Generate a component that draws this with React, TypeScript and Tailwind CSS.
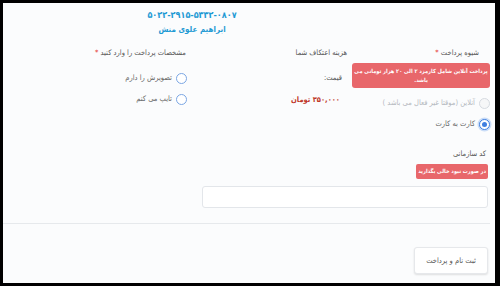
import {ReactElement} from 'react';

type RadioProps = {
    label: string,
    checked?: boolean,
    disabled?: boolean,
    className?: string,
};

function Radio({label, checked, disabled, className}: RadioProps): ReactElement {
    return (
        <div className={`flex h-[14px] items-center gap-[4px] ${className ?? ''}`}>
            <span
                className={
                    checked
                        ? 'flex h-[11px] w-[11px] items-center justify-center rounded-full border border-[#3f7fe0] bg-white shadow-[0_0_0_1.5px_#c9dcf7]'
                        : disabled
                            ? 'h-[11px] w-[11px] rounded-full border border-[#d6dbe1] bg-[#f6f7f8]'
                            : 'h-[11px] w-[11px] rounded-full border border-[#7aa6e4] bg-white'
                }
            >
                {checked ? <span className="h-[5px] w-[5px] rounded-full bg-[#3f7fe0]" /> : null}
            </span>
            <span className={`text-[7.5px] leading-[12px] ${disabled ? 'text-[#b4b8bd]' : 'text-[#666]'}`}>{label}</span>
        </div>
    );
}

export default function App(): ReactElement {
    return (
        <div className="h-[286px] w-[500px] bg-black pb-[3px] pl-[3px] pr-[5px] pt-[3px]">
            <div dir="rtl" className="h-full bg-[#fbfcfd] font-['DejaVu_Sans_Condensed','DejaVu_Sans',sans-serif]">
                <div className="pr-[114px] pt-[6px] text-center font-bold text-[#1f9ad4]">
                    <p className="text-[9px] leading-[12px]">۵۰۲۲-۲۹۱۵-۵۳۳۲-۰۸۰۷</p>
                    <p className="mt-[3px] text-[8px] leading-[12px]">ابراهیم علوی منش</p>
                </div>

                <div className="mt-[11px] flex pr-[5px]">
                    <div className="w-[138px]">
                        <p className="pr-[11px] text-[7.5px] leading-[12px] text-[#555]">
                            شیوه پرداخت <span className="text-[#e53935]">*</span>
                        </p>
                        <div className="mt-[4px] flex h-[25px] flex-col justify-center rounded-[3px] bg-[#e8676b] px-[2px] text-center text-[5.6px] font-bold leading-[9px] text-white">
                            <span className="whitespace-nowrap">پرداخت آنلاین شامل کارمزد ۲ الی ۲۰ هزار تومانی می</span>
                            <span>باشد.</span>
                        </div>
                        <Radio className="mt-[8px]" label="آنلاین (موقتا غیر فعال می باشد )" disabled />
                        <Radio className="mt-[7px]" label="کارت به کارت" checked />
                    </div>

                    <div className="mr-[5px] w-[160px]">
                        <p className="text-[7.5px] leading-[12px] text-[#555]">هزینه اعتکاف شما</p>
                        <p className="mt-[13px] pr-[5px] text-[7.5px] leading-[12px] text-[#555]">قیمت:</p>
                        <p className="mt-[10px] pr-[7px] text-[7.5px] font-bold leading-[12px] text-[#c0392b]">۳۵۰,۰۰۰ تومان</p>
                    </div>

                    <div className="flex-1">
                        <p className="pr-[1px] text-[7.5px] leading-[12px] text-[#555]">
                            مشخصات پرداخت را وارد کنید <span className="text-[#e53935]">*</span>
                        </p>
                        <Radio className="mt-[12px]" label="تصویرش را دارم" />
                        <Radio className="mt-[7px]" label="تایپ می کنم" />
                    </div>
                </div>

                <div className="mt-[17px] pr-[7px]">
                    <p className="pr-[2px] text-[7.5px] leading-[12px] text-[#555]">کد سازمانی</p>
                    <div className="mt-[4px] flex h-[15px] w-fit items-center rounded-[2px] bg-[#e8676b] px-[2px] text-[5.6px] font-bold text-white">
                        در صورت نبود خالی بگذارید
                    </div>
                    <div className="mt-[7px] h-[22px] w-[286px] rounded-[3px] border border-[#e3e6ea] bg-white" />
                </div>

                <div className="mt-[15px] mr-[5px] border-t border-[#e6e9ec]" />

                <div className="mt-[23px] pr-[7px]">
                    <button className="flex h-[27px] w-[74px] items-center justify-center rounded-[3px] border border-[#e6e8eb] bg-white text-[7.5px] text-[#555] shadow-[0_1px_2px_rgba(0,0,0,0.12)]">
                        ثبت نام و پرداخت
                    </button>
                </div>
            </div>
        </div>
    );
}
